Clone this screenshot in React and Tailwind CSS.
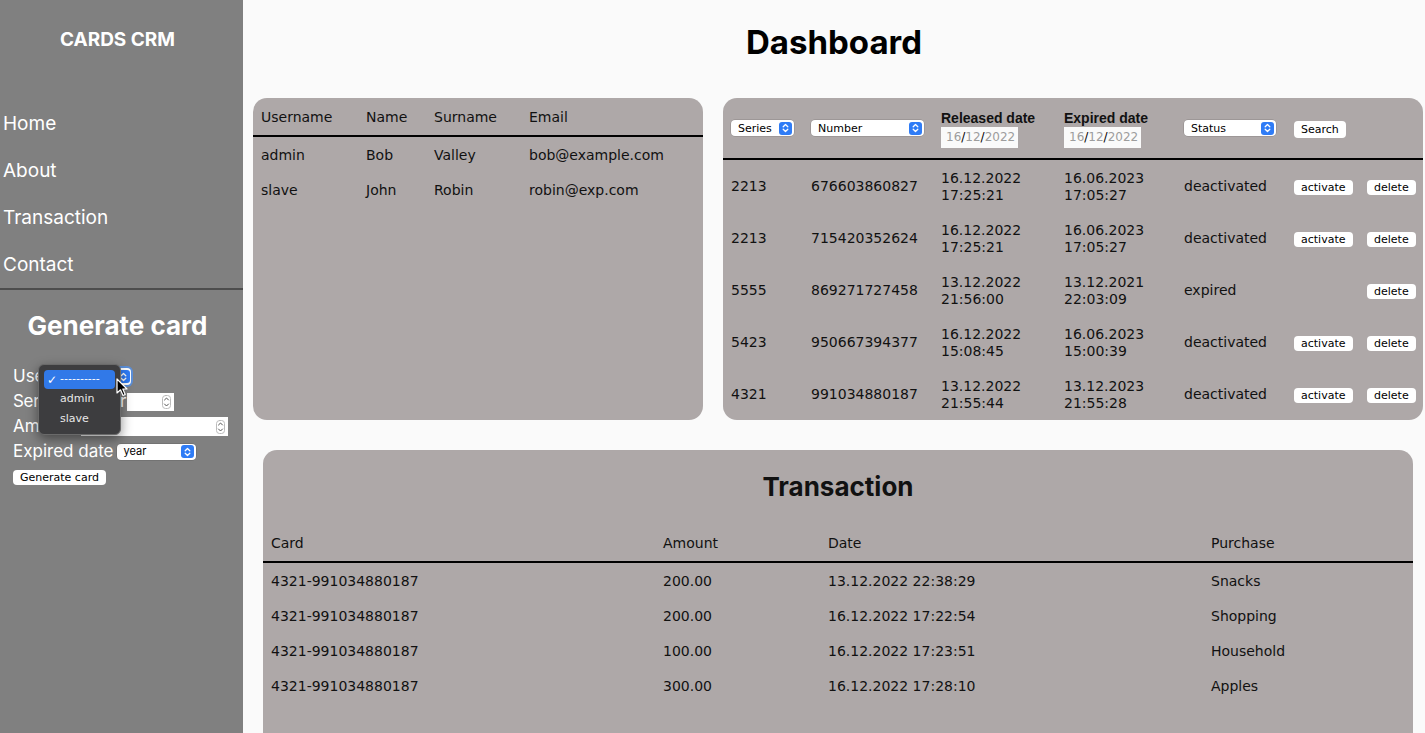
import React from 'react';

const cards = [
  ['2213', '676603860827', '16.12.2022', '17:25:21', '16.06.2023', '17:05:27', 'deactivated', true],
  ['2213', '715420352624', '16.12.2022', '17:25:21', '16.06.2023', '17:05:27', 'deactivated', true],
  ['5555', '869271727458', '13.12.2022', '21:56:00', '13.12.2021', '22:03:09', 'expired', false],
  ['5423', '950667394377', '16.12.2022', '15:08:45', '16.06.2023', '15:00:39', 'deactivated', true],
  ['4321', '991034880187', '13.12.2022', '21:55:44', '13.12.2023', '21:55:28', 'deactivated', true],
];

const users = [
  ['admin', 'Bob', 'Valley', 'bob@example.com'],
  ['slave', 'John', 'Robin', 'robin@exp.com'],
];

const transactions = [
  ['4321-991034880187', '200.00', '13.12.2022 22:38:29', 'Snacks'],
  ['4321-991034880187', '200.00', '16.12.2022 17:22:54', 'Shopping'],
  ['4321-991034880187', '100.00', '16.12.2022 17:23:51', 'Household'],
  ['4321-991034880187', '300.00', '16.12.2022 17:28:10', 'Apples'],
];

const SelArrow = () => (
  <span className="flex h-[13px] w-[13px] items-center justify-center rounded-[3px] bg-[#2f7cf6]">
    <svg width="7" height="10" viewBox="0 0 7 10" fill="none" stroke="white" strokeWidth="1.3" strokeLinecap="round" strokeLinejoin="round">
      <path d="M1.2 3.8 3.5 1.5 5.8 3.8M1.2 6.2 3.5 8.5 5.8 6.2" />
    </svg>
  </span>
);

const Spinner = () => (
  <svg width="9" height="14" viewBox="0 0 9 14" fill="none" stroke="#555" strokeWidth="1" strokeLinecap="round" strokeLinejoin="round">
    <rect x="0.5" y="0.5" width="8" height="13" rx="3" stroke="#bbb" />
    <path d="M2.5 5 4.5 3 6.5 5M2.5 9 4.5 11 6.5 9" />
  </svg>
);

function Select({ label, className = '' }) {
  return (
    <div
      className={`flex h-[16px] items-center justify-between rounded-[4px] bg-white pl-[7px] pr-[2px] text-[11px] leading-none text-black shadow-[0_0_0_0.5px_rgba(0,0,0,0.2)] ${className}`}
    >
      <span>{label}</span>
      <SelArrow />
    </div>
  );
}

const Btn = ({ children, className = '' }) => (
  <button className={`h-[15px] rounded-[4px] bg-white px-[7px] text-[11px] leading-none text-black ${className}`}>
    {children}
  </button>
);

const DateInput = () => (
  <div className="flex h-[21px] w-[77px] items-center bg-[#fafafa] pl-[5px] text-[12px] text-[#9d9d9d]">
    16<span className="text-black">/</span>12<span className="text-black">/</span>2022
  </div>
);

function Sidebar() {
  return (
    <aside className="relative w-[243px] shrink-0 bg-[#808080] font-['Inter',sans-serif] text-white">
      <div className="h-[100px] pr-[8px] pt-[28px] text-center text-[19px] font-bold leading-[24px]">CARDS CRM</div>
      <nav className="border-b-2 border-[#4d4d4d]">
        {['Home', 'About', 'Transaction', 'Contact'].map((t) => (
          <div key={t} className="flex h-[47px] items-center pl-[3px] pt-[1px] text-[19px]">
            {t}
          </div>
        ))}
      </nav>
      <h2 className="mt-[20px] pr-[8px] text-center text-[26px] font-bold leading-[32px]">Generate card</h2>
      <div className="relative mt-[22px] pl-[13px] text-[17px]">
        <div className="flex h-[25px] items-center gap-[8px]">
          <span>User</span>
          <div className="flex h-[17px] w-[72px] items-center justify-end rounded-[4px] bg-white pr-[1px] ring-2 ring-[#5b8fd9]">
            <SelArrow />
          </div>
        </div>
        <div className="flex h-[25px] items-center gap-[1px]">
          <span className="tracking-[-0.3px]">Series number</span>
          <div className="flex h-[18px] w-[47px] items-center justify-end bg-white pr-[3px]">
            <Spinner />
          </div>
        </div>
        <div className="flex h-[25px] items-center gap-[6px]">
          <span>Amount</span>
          <div className="flex h-[19px] w-[147px] items-center justify-end bg-white pr-[3px]">
            <Spinner />
          </div>
        </div>
        <div className="flex h-[25px] items-center gap-[3px]">
          <span>Expired date</span>
          <Select label="year" className="w-[79px]" />
        </div>
        <div className="mt-[6px] flex">
          <Btn className="px-[7px] font-['DejaVu_Sans',sans-serif]">Generate card</Btn>
        </div>

        {/* open native select menu */}
        <div className="absolute left-[38px] top-[0px] w-[83px] rounded-[6px] border border-[#6a6a6a] bg-[#3d3d3f] p-[5px] font-['DejaVu_Sans',sans-serif] text-[11px] shadow-[0_4px_12px_rgba(0,0,0,0.45)]">
          <div className="flex h-[19px] items-center gap-[3px] rounded-[4px] bg-[#3179e8] pl-[3px] text-white">
            <span className="text-[12px]">✓</span>
            <span>----------</span>
          </div>
          <div className="flex h-[20px] items-center pl-[16px] text-[#e8e8e8]">admin</div>
          <div className="flex h-[20px] items-center pl-[16px] text-[#e8e8e8]">slave</div>
        </div>
        <svg className="absolute left-[116px] top-[14px]" width="12" height="19" viewBox="0 0 12 19">
          <path d="M1 1 L1 15 L4.5 11.8 L7 17.5 L9.2 16.5 L6.8 11 L11 11 Z" fill="black" stroke="white" strokeWidth="1.2" strokeLinejoin="round" />
        </svg>
      </div>
    </aside>
  );
}

function UsersCard() {
  const cols = 'grid grid-cols-[105px_68px_95px_1fr] items-center px-[8px]';
  return (
    <div className="h-[322px] w-[450px] rounded-[14px] bg-[#aea8a8]">
      <div className={`${cols} h-[39px] border-b-2 border-black pt-[1px]`}>
        <span>Username</span>
        <span>Name</span>
        <span>Surname</span>
        <span>Email</span>
      </div>
      {users.map((u) => (
        <div key={u[0]} className={`${cols} h-[35px] pt-[2px]`}>
          {u.map((c, i) => (
            <span key={i}>{c}</span>
          ))}
        </div>
      ))}
    </div>
  );
}

function CardsCard() {
  const cols = 'grid grid-cols-[80px_130px_123px_120px_110px_73px_1fr] items-center px-[8px]';
  return (
    <div className="h-[322px] w-[700px] rounded-[14px] bg-[#aea8a8]">
      <div className={`${cols} h-[62px] border-b-2 border-black`}>
        <Select label="Series" className="w-[63px]" />
        <Select label="Number" className="w-[113px]" />
        <div className="flex flex-col">
          <span className="font-['Liberation_Sans',sans-serif] font-semibold leading-[18px]">Released date</span>
          <DateInput />
        </div>
        <div className="flex flex-col">
          <span className="font-['Liberation_Sans',sans-serif] font-semibold leading-[18px]">Expired date</span>
          <DateInput />
        </div>
        <Select label="Status" className="w-[92px]" />
        <div>
          <Btn className="h-[17px]">Search</Btn>
        </div>
        <span />
      </div>
      {cards.map((r, i) => (
        <div key={i} className={`${cols} h-[52px] pt-[1px]`}>
          <span>{r[0]}</span>
          <span>{r[1]}</span>
          <span className="leading-[17px]">
            {r[2]}
            <br />
            {r[3]}
          </span>
          <span className="leading-[17px]">
            {r[4]}
            <br />
            {r[5]}
          </span>
          <span>{r[6]}</span>
          <div>{r[7] ? <Btn>activate</Btn> : null}</div>
          <div>
            <Btn>delete</Btn>
          </div>
        </div>
      ))}
    </div>
  );
}

function TransactionCard() {
  const cols = 'grid grid-cols-[392px_165px_383px_1fr] items-center px-[8px]';
  return (
    <div className="ml-[20px] mt-[30px] h-[320px] w-[1150px] rounded-[14px] bg-[#aea8a8] pt-[21px]">
      <h2 className="text-center font-['Inter',sans-serif] text-[26px] font-bold leading-[32px]">Transaction</h2>
      <div className={`${cols} mt-[21px] h-[39px] border-b-2 border-black pt-[1px]`}>
        <span>Card</span>
        <span>Amount</span>
        <span>Date</span>
        <span>Purchase</span>
      </div>
      {transactions.map((t, i) => (
        <div key={i} className={`${cols} h-[35px] pt-[1px]`}>
          {t.map((c, j) => (
            <span key={j}>{c}</span>
          ))}
        </div>
      ))}
    </div>
  );
}

export default function App() {
  return (
    <div className="flex h-[733px] w-[1425px] overflow-hidden bg-[#fafafa] font-['DejaVu_Sans',sans-serif] text-[14px] text-[#111]">
      <Sidebar />
      <main className="flex-1">
        <h1 className="pt-[22px] text-center font-['Inter',sans-serif] text-[33px] font-bold leading-[40px] text-black">
          Dashboard
        </h1>
        <div className="mt-[36px] flex gap-[20px] pl-[10px]">
          <UsersCard />
          <CardsCard />
        </div>
        <TransactionCard />
      </main>
    </div>
  );
}
